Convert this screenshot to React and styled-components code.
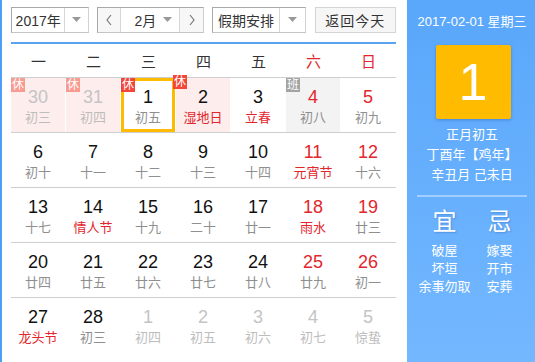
import React from "react";
import styled, { createGlobalStyle } from "styled-components";

const GlobalStyle = createGlobalStyle`
  html, body {
    margin: 0;
    padding: 0;
    background: #fff;
  }
  body {
    font-family: "Liberation Sans", "Noto Sans CJK SC", sans-serif;
  }
`;

const RED = "#e3262d";
const CJK = `"Liberation Sans", "Noto Sans CJK SC", sans-serif`;

const weekdays = ["一", "二", "三", "四", "五", "六", "日"];

// day, lunar, flags
const weeks = [
  [
    { d: 30, l: "初三", other: true, badge: "休", bg: "rest" },
    { d: 31, l: "初四", other: true, badge: "休", bg: "rest" },
    { d: 1, l: "初五", badge: "休", today: true },
    { d: 2, l: "湿地日", fest: true, badge: "休", bg: "rest" },
    { d: 3, l: "立春", fest: true },
    { d: 4, l: "初八", badge: "班", bg: "work" },
    { d: 5, l: "初九" },
  ],
  [
    { d: 6, l: "初十" },
    { d: 7, l: "十一" },
    { d: 8, l: "十二" },
    { d: 9, l: "十三" },
    { d: 10, l: "十四" },
    { d: 11, l: "元宵节", fest: true },
    { d: 12, l: "十六" },
  ],
  [
    { d: 13, l: "十七" },
    { d: 14, l: "情人节", fest: true },
    { d: 15, l: "十九" },
    { d: 16, l: "二十" },
    { d: 17, l: "廿一" },
    { d: 18, l: "雨水", fest: true },
    { d: 19, l: "廿三" },
  ],
  [
    { d: 20, l: "廿四" },
    { d: 21, l: "廿五" },
    { d: 22, l: "廿六" },
    { d: 23, l: "廿七" },
    { d: 24, l: "廿八" },
    { d: 25, l: "廿九" },
    { d: 26, l: "初一" },
  ],
  [
    { d: 27, l: "龙头节", fest: true },
    { d: 28, l: "初三" },
    { d: 1, l: "初四", other: true },
    { d: 2, l: "初五", other: true },
    { d: 3, l: "初六", other: true },
    { d: 4, l: "初七", other: true },
    { d: 5, l: "惊蛰", other: true },
  ],
];

export default function App() {
  return (
    <>
      <GlobalStyle />
      <Wrapper>
        <Main>
          <Toolbar>
            <Select $w={79} $arrow={23}>
              <SelectText>2017年</SelectText>
              <ArrowCell>
                <Caret />
              </ArrowCell>
            </Select>
            <MonthGroup>
              <NavButton>
                <Chevron dir="left" />
              </NavButton>
              <MonthSelect>
                <span>2月</span>
                <Caret />
              </MonthSelect>
              <NavButton>
                <Chevron dir="right" />
              </NavButton>
            </MonthGroup>
            <Select $w={94} $arrow={25}>
              <SelectText>假期安排</SelectText>
              <ArrowCell>
                <Caret />
              </ArrowCell>
            </Select>
            <TodayButton>返回今天</TodayButton>
          </Toolbar>

          <WeekHeader>
            {weekdays.map((w, i) => (
              <WeekName key={w} $weekend={i >= 5}>
                {w}
              </WeekName>
            ))}
          </WeekHeader>

          {weeks.map((week, wi) => (
            <WeekRow key={wi}>
              {week.map((c, ci) => (
                <DayCell key={ci} $bg={c.bg} $today={c.today}>
                  {c.badge && (
                    <Badge $kind={c.badge === "班" ? "work" : c.other ? "fade" : "rest"}>
                      {c.badge}
                    </Badge>
                  )}
                  <DayNum $other={c.other} $weekend={ci >= 5}>
                    {c.d}
                  </DayNum>
                  <Lunar $other={c.other} $fest={c.fest}>
                    {c.l}
                  </Lunar>
                </DayCell>
              ))}
            </WeekRow>
          ))}
        </Main>

        <Side>
          <SideDate>2017-02-01 星期三</SideDate>
          <BigDay>1</BigDay>
          <LunarInfo>
            <div>正月初五</div>
            <div>丁酉年【鸡年】</div>
            <div>辛丑月 己未日</div>
          </LunarInfo>
          <Divider />
          <Almanac>
            <AlmanacCol>
              <AlmanacHead>宜</AlmanacHead>
              <div>破屋</div>
              <div>坏垣</div>
              <div>余事勿取</div>
            </AlmanacCol>
            <AlmanacCol>
              <AlmanacHead>忌</AlmanacHead>
              <div>嫁娶</div>
              <div>开市</div>
              <div>安葬</div>
            </AlmanacCol>
          </Almanac>
        </Side>
      </Wrapper>
    </>
  );
}

function Caret() {
  return (
    <svg width="9" height="5" viewBox="0 0 9 5">
      <path d="M0 0 H9 L4.5 5 Z" fill="#999" />
    </svg>
  );
}

function Chevron({ dir }) {
  const d = dir === "left" ? "M6 1 L2 6 L6 11" : "M2 1 L6 6 L2 11";
  return (
    <svg width="8" height="12" viewBox="0 0 8 12">
      <path d={d} fill="none" stroke="#777" strokeWidth="1.2" />
    </svg>
  );
}

const Wrapper = styled.div`
  display: flex;
  width: 535px;
  height: 362px;
  border-left: 2px solid #4d9ff5;
  box-sizing: border-box;
  overflow: hidden;
`;

const Main = styled.div`
  width: 405px;
  padding: 0 11px 0 9px;
  box-sizing: border-box;
  flex-shrink: 0;
`;

const Toolbar = styled.div`
  display: flex;
  align-items: center;
  height: 44px;
  padding-bottom: 3px;
  box-sizing: border-box;
  border-bottom: 2px solid #5ba3ee;
  gap: 8px;
  font-family: ${CJK};
  font-size: 14px;
  color: #333;
`;

const Select = styled.div`
  display: grid;
  grid-template-columns: 1fr ${(p) => p.$arrow}px;
  width: ${(p) => p.$w}px;
  height: 26px;
  box-sizing: border-box;
  border: 1px solid #a9a9a9;
  border-right-color: #d0d0d0;
  border-bottom-color: #c4c4c4;
  background: #fff;
`;

const SelectText = styled.div`
  display: flex;
  align-items: center;
  justify-content: center;
  border-right: 1px solid #d6d6d6;
`;

const ArrowCell = styled.div`
  display: flex;
  align-items: center;
  justify-content: center;
`;

const MonthGroup = styled.div`
  display: grid;
  grid-template-columns: 22px 60px 23px;
  height: 26px;
  box-sizing: border-box;
  border: 1px solid #a9a9a9;
  border-right-color: #d0d0d0;
  border-bottom-color: #c4c4c4;
`;

const NavButton = styled.div`
  display: flex;
  align-items: center;
  justify-content: center;
  background: #f7f7f7;
`;

const MonthSelect = styled.div`
  display: flex;
  align-items: center;
  justify-content: space-between;
  padding: 0 7px 0 13px;
  border-left: 1px solid #d6d6d6;
  border-right: 1px solid #d6d6d6;
  background: #fff;
`;

const TodayButton = styled.div`
  display: flex;
  align-items: center;
  justify-content: center;
  width: 82px;
  height: 26px;
  margin-left: 1px;
  box-sizing: border-box;
  border: 1px solid #d4d4d4;
  background: #f6f6f6;
  letter-spacing: 1px;
`;

const WeekHeader = styled.div`
  display: grid;
  grid-template-columns: repeat(7, 55px);
  height: 33px;
  align-items: center;
  font-family: ${CJK};
  font-size: 15px;
`;

const WeekName = styled.div`
  text-align: center;
  color: ${(p) => (p.$weekend ? RED : "#333")};
`;

const WeekRow = styled.div`
  display: grid;
  grid-template-columns: repeat(7, 55px);
  height: 55px;
  box-sizing: border-box;
  border-top: 1px solid #cfcfcf;
`;

const cellBg = { rest: "#fdeeed", work: "#f3f3f3" };

const DayCell = styled.div`
  position: relative;
  display: flex;
  flex-direction: column;
  align-items: center;
  box-sizing: border-box;
  margin-right: 1px;
  background: ${(p) => cellBg[p.$bg] || "#fff"};
  border: ${(p) => (p.$today ? "3px solid #ffbb00" : "none")};
  padding-top: ${(p) => (p.$today ? "4px" : "7px")};
`;

const badgeBg = { rest: "#f3453a", fade: "#f99a92", work: "#a3a3a3" };

const Badge = styled.span`
  position: absolute;
  top: ${(p) => (p.$kind === "rest" ? "-3px" : "0")};
  left: ${(p) => (p.$kind === "rest" ? "-3px" : "0")};
  width: 14px;
  height: 14px;
  line-height: 14px;
  text-align: center;
  font-family: ${CJK};
  font-size: 12px;
  color: #fff;
  background: ${(p) => badgeBg[p.$kind]};
`;

const DayNum = styled.div`
  font-family: "Liberation Sans", Arial, sans-serif;
  font-size: 18px;
  line-height: 24px;
  color: ${(p) => (p.$other ? "#c4c4c4" : p.$weekend ? RED : "#111")};
`;

const Lunar = styled.div`
  font-family: ${CJK};
  font-size: 13px;
  line-height: 18px;
  color: ${(p) => (p.$other ? "#bdbdbd" : p.$fest ? RED : "#8f8f8f")};
`;

const Side = styled.div`
  flex: 1;
  padding: 13px 8px 0 10px;
  box-sizing: border-box;
  background: linear-gradient(180deg, #59a7fb 0%, #73b7ff 100%);
  color: #fff;
  font-family: ${CJK};
  display: flex;
  flex-direction: column;
  align-items: stretch;
`;

const SideDate = styled.div`
  text-align: center;
  font-size: 13px;
  line-height: 18px;
`;

const BigDay = styled.div`
  align-self: center;
  width: 75px;
  height: 74px;
  margin-top: 14px;
  margin-left: 2px;
  border-radius: 2px;
  background: #ffbb00;
  box-shadow: 0 1px 3px rgba(0, 60, 140, 0.35);
  display: flex;
  align-items: center;
  justify-content: center;
  font-family: "Liberation Sans", Arial, sans-serif;
  font-size: 52px;
  color: #fff;
`;

const LunarInfo = styled.div`
  margin-top: 6px;
  text-align: center;
  font-size: 13px;
  line-height: 20px;
`;

const Divider = styled.div`
  height: 2px;
  margin-top: 10px;
  background: rgba(255, 255, 255, 0.4);
`;

const Almanac = styled.div`
  display: grid;
  grid-template-columns: 1fr 1fr;
  margin-top: 10px;
  font-size: 13px;
  line-height: 18px;
  text-align: center;
`;

const AlmanacCol = styled.div`
  display: flex;
  flex-direction: column;
  align-items: center;
`;

const AlmanacHead = styled.div`
  font-size: 24px;
  line-height: 30px;
  margin-bottom: 5px;
  text-shadow: 1px 1px 2px rgba(0, 40, 120, 0.25);
`;
